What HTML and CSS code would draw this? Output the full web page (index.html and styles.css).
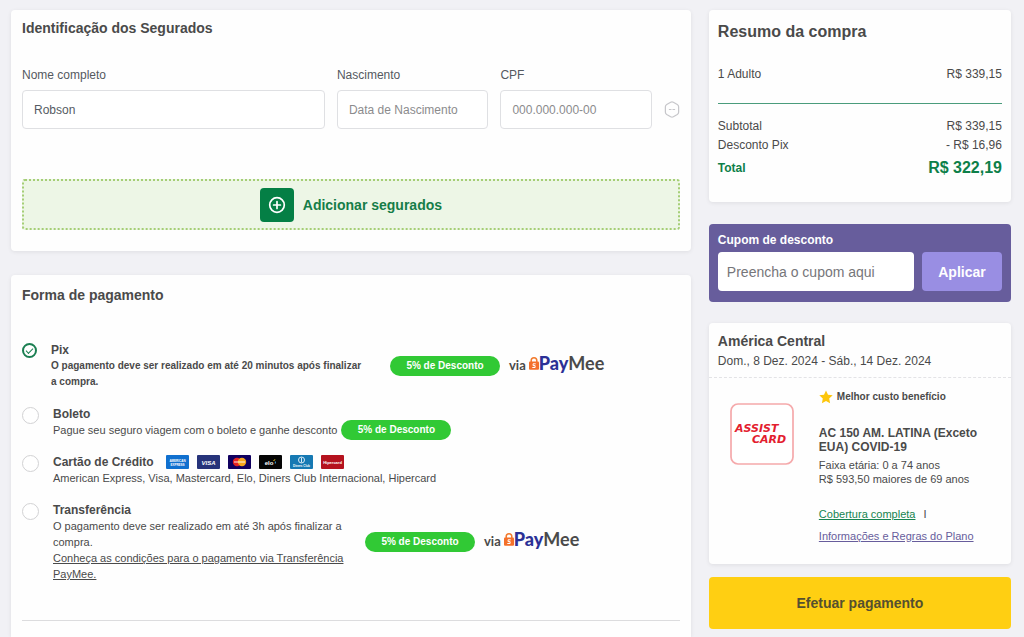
FILE: index.html
```html
<!DOCTYPE html>
<html lang="pt-BR">
<head>
<meta charset="utf-8">
<meta name="viewport" content="width=device-width, initial-scale=1">
<title>Pagamento</title>
<link rel="stylesheet" href="styles.css">
</head>
<body>
<svg class="defs" aria-hidden="true">
  <symbol id="lock" viewBox="0 0 10 13">
    <path d="M2.2 6V3.6a2.8 2.8 0 0 1 5.6 0V6" fill="none" stroke="#f27a2c" stroke-width="1.5"/>
    <rect x="0" y="4.6" width="10" height="8.2" rx="1" fill="#f4702a"/>
    <path d="M6.7 6.8H4.1v1.8h2v1.9H3.3" fill="none" stroke="#fff" stroke-width="1"/>
  </symbol>
</svg>
<div class="page">
  <main class="column">
    <section class="card insured">
      <h2 class="title">Identificação dos Segurados</h2>
      <form class="fields">
        <div class="field">
          <label for="nome">Nome completo</label>
          <input id="nome" type="text" value="Robson">
        </div>
        <div class="field">
          <label for="nascimento">Nascimento</label>
          <input id="nascimento" type="text" placeholder="Data de Nascimento">
        </div>
        <div class="field">
          <label for="cpf">CPF</label>
          <input id="cpf" type="text" placeholder="000.000.000-00">
        </div>
        <button class="remove" type="button" aria-label="Remover segurado">
          <svg width="16" height="17" viewBox="0 0 16 18" fill="none" stroke="#c6c6ca" stroke-width="1.3" stroke-linejoin="round">
            <path d="M6.6 1.3Q8 .6 9.4 1.3L13.6 3.7Q15 4.600 15 6V12Q15 13.400 13.600 14.300L9.400 16.700Q8 17.400 6.600 16.700L2.400 14.300Q1 13.400 1 12V6Q1 4.600 2.400 3.700Z"/>
            <path d="M4.700 9H11.300" stroke-dasharray="2.800 1"/>
          </svg>
        </button>
      </form>
      <button class="add" type="button">
        <span class="add-icon">
          <svg width="18" height="18" viewBox="0 0 18 18" fill="none" stroke="#fff" stroke-width="1.700" stroke-linecap="round">
            <circle cx="9" cy="9" r="7.300"/>
            <path d="M9 5.600V12.400M5.600 9H12.400"/>
          </svg>
        </span>
        Adicionar segurados
      </button>
    </section>

    <section class="card payment">
      <h2 class="title">Forma de pagamento</h2>
      <div class="options">
        <div class="option">
          <input class="radio" type="radio" name="forma" id="pix" checked>
          <div class="option-text wide">
            <label for="pix">Pix</label>
            <p class="strong">O pagamento deve ser realizado em até 20 minutos após finalizar a compra.</p>
          </div>
          <span class="pill">5% de Desconto</span>
          <span class="via">via <span class="paymee"><svg class="lock" width="10" height="13"><use href="#lock"/></svg><b>Pay</b>Mee</span></span>
        </div>
        <div class="option">
          <input class="radio" type="radio" name="forma" id="boleto">
          <div class="option-text">
            <label for="boleto">Boleto</label>
            <div class="line">
              <p>Pague seu seguro viagem com o boleto e ganhe desconto</p>
              <span class="pill">5% de Desconto</span>
            </div>
          </div>
        </div>
        <div class="option">
          <input class="radio" type="radio" name="forma" id="cartao">
          <div class="option-text">
            <div class="line brand-line">
              <label for="cartao">Cartão de Crédito</label>
              <span class="brands">
                <svg width="23" height="14" viewBox="0 0 23 14"><rect width="23" height="14" rx="1" fill="#1070cf"/><text x="11.500" y="6.700" class="brand-text tiny">AMERICAN</text><text x="11.500" y="10.700" class="brand-text tiny">EXPRESS</text></svg>
                <svg width="23" height="14" viewBox="0 0 23 14"><rect width="23" height="14" rx="1" fill="#26337a"/><text x="11.500" y="9.500" class="brand-text italic">VISA</text></svg>
                <svg width="23" height="14" viewBox="0 0 23 14"><rect width="23" height="14" rx="1" fill="#10005f"/><circle cx="9" cy="7" r="4.200" fill="#e32222"/><circle cx="14" cy="7" r="4.200" fill="#f8a51b"/><path d="M6 7H17" stroke="#fff" stroke-width="1.300" opacity=".7"/></svg>
                <svg width="23" height="14" viewBox="0 0 23 14"><rect width="23" height="14" rx="1" fill="#050505"/><text x="10" y="9.500" class="brand-text">elo</text><path d="M14.500 5.500l1.700-.8" stroke="#f7d21a"/><path d="M16.300 6.500v2" stroke="#48a8dc"/></svg>
                <svg width="23" height="14" viewBox="0 0 23 14"><rect width="23" height="14" rx="1" fill="#1679b3"/><circle cx="11.500" cy="5" r="3" fill="none" stroke="#d8eaf5" stroke-width="1"/><path d="M11.500 2.500V7.500" stroke="#d8eaf5"/><text x="11.500" y="12" class="brand-text tiny">Diners Club</text></svg>
                <svg width="23" height="14" viewBox="0 0 23 14"><rect width="23" height="14" rx="1" fill="#b5121e"/><text x="11.500" y="8.500" class="brand-text small">Hipercard</text></svg>
              </span>
            </div>
            <p>American Express, Visa, Mastercard, Elo, Diners Club Internacional, Hipercard</p>
          </div>
        </div>
        <div class="option">
          <input class="radio" type="radio" name="forma" id="transferencia">
          <div class="option-text medium">
            <label for="transferencia">Transferência</label>
            <p>O pagamento deve ser realizado em até 3h após finalizar a compra.</p>
            <a class="terms" href="#">Conheça as condições para o pagamento via Transferência PayMee.</a>
          </div>
          <span class="pill">5% de Desconto</span>
          <span class="via">via <span class="paymee"><svg class="lock" width="10" height="13"><use href="#lock"/></svg><b>Pay</b>Mee</span></span>
        </div>
      </div>
      <hr class="divider">
    </section>
  </main>

  <aside class="column">
    <section class="card summary">
      <h2 class="summary-title">Resumo da compra</h2>
      <dl class="row"><dt>1 Adulto</dt><dd>R$ 339,15</dd></dl>
      <hr class="green-line">
      <dl class="row"><dt>Subtotal</dt><dd>R$ 339,15</dd></dl>
      <dl class="row"><dt>Desconto Pix</dt><dd>- R$ 16,96</dd></dl>
      <dl class="row total"><dt>Total</dt><dd>R$ 322,19</dd></dl>
    </section>

    <form class="coupon">
      <label for="cupom">Cupom de desconto</label>
      <div class="coupon-row">
        <input id="cupom" type="text" placeholder="Preencha o cupom aqui">
        <button type="button">Aplicar</button>
      </div>
    </form>

    <section class="card trip">
      <header class="trip-head">
        <h2>América Central</h2>
        <p>Dom., 8 Dez. 2024 - Sáb., 14 Dez. 2024</p>
      </header>
      <div class="trip-body">
        <svg class="assist" width="64" height="62" viewBox="0 0 64 62" role="img" aria-label="Assist Card">
          <rect x="1" y="1" width="62" height="60" rx="7" fill="#fff" stroke="#f5a9ab" stroke-width="1.700"/>
          <text x="5" y="29">ASSIST</text>
          <text x="22" y="40">CARD</text>
        </svg>
        <div class="plan">
          <p class="badge">
            <svg width="14" height="14" viewBox="0 0 14 14"><path d="M7 .4l2 4.300 4.700.6-3.500 3.200.9 4.700L7 10.900l-4.100 2.300.9-4.700L.3 5.300l4.700-.6z" fill="#fdc60b"/></svg>
            Melhor custo benefício
          </p>
          <h3>AC 150 AM. LATINA (Exceto EUA) COVID-19</h3>
          <p>Faixa etária: 0 a 74 anos</p>
          <p>R$ 593,50 maiores de 69 anos</p>
          <div class="links">
            <span><a class="coverage" href="#">Cobertura completa</a><span class="bar">I</span></span>
            <a class="rules" href="#">Informações e Regras do Plano</a>
          </div>
        </div>
      </div>
    </section>

    <button class="pay" type="button">Efetuar pagamento</button>
  </aside>
</div>
</body>
</html>
```
FILE: styles.css
```css
* {
  box-sizing: border-box;
}

body {
  margin: 0;
  background: #f1f1f5;
  color: #4a4a4a;
  font-family: "Liberation Sans", Arial, sans-serif;
  font-size: 12px;
  line-height: 16px;
}

h2, h3, p, dl, dd, hr {
  margin: 0;
}

input, button {
  font: inherit;
}

button {
  border: 0;
  cursor: pointer;
}

.defs {
  position: absolute;
  width: 0;
  height: 0;
}

.page {
  display: grid;
  grid-template-columns: minmax(0, 9fr) minmax(0, 4fr);
  gap: 18px;
  min-height: 100vh;
  padding: 10px 13px 0 11px;
}

.column {
  display: flex;
  flex-direction: column;
}

.card {
  background: #fefefe;
  border-radius: 4px;
  box-shadow: 0 1px 4px rgba(0, 0, 0, 0.08);
}

.title {
  font-size: 14px;
  line-height: 18px;
}

/* Insured people */
.insured {
  margin-bottom: 24px;
  padding: 9px 11px 21px;
}

.fields {
  display: grid;
  grid-template-columns: 2fr 1fr 1fr 16px;
  align-items: end;
  gap: 12px;
  margin: 30px 0 50px;
}

.field {
  display: grid;
  gap: 7px;
  color: #55595f;
}

.field input {
  width: 100%;
  height: 39px;
  padding: 0 11px;
  border: 1px solid #dfe0e3;
  border-radius: 4px;
  background: #fff;
  color: #555b63;
}

.field input::placeholder {
  color: #8b8b8d;
}

.remove {
  display: flex;
  align-items: center;
  height: 39px;
  padding: 0;
  background: none;
}

.add {
  display: flex;
  align-items: center;
  justify-content: center;
  gap: 9px;
  width: 100%;
  height: 51px;
  padding: 0;
  border: 2px dotted #a5ce76;
  border-radius: 3px;
  background: #edf6e6;
  color: #167d48;
  font-size: 14px;
  font-weight: bold;
}

.add-icon {
  display: grid;
  place-items: center;
  width: 34px;
  height: 34px;
  border-radius: 4px;
  background: #047f45;
}

/* Payment methods */
.payment {
  flex: 1;
  padding: 11px 11px 16px;
  border-radius: 4px 4px 0 0;
}

.options {
  display: grid;
  gap: 16px;
  margin: 38px 0;
}

.option {
  display: flex;
  align-items: center;
}

.option p,
.terms {
  font-size: 11px;
}

.option label {
  font-weight: bold;
}

.option .strong {
  max-width: 316px;
  font-size: 10px;
  font-weight: bold;
}

.radio {
  appearance: none;
  display: grid;
  place-items: center;
  align-self: flex-start;
  flex: none;
  width: 17px;
  height: 17px;
  margin: 1px 14px 0 0;
  border: 1px solid #d2d2d4;
  border-radius: 50%;
  background: #fff;
}

.radio:checked {
  width: 15px;
  height: 15px;
  border: 2px solid #1b7f52;
}

.radio:checked::before {
  content: "";
  width: 6px;
  height: 3px;
  margin-bottom: 2px;
  border: solid #1b7f52;
  border-width: 0 0 1px 1px;
  transform: rotate(-45deg);
}

.wide {
  width: 339px;
}

.medium {
  width: 312px;
}

.medium p,
.terms {
  display: block;
  max-width: 300px;
}

.terms {
  color: inherit;
}

.line {
  display: flex;
  align-items: center;
  gap: 4px;
  height: 16px;
}

.brand-line {
  gap: 12px;
}

.pill {
  flex: none;
  width: 110px;
  border-radius: 10px;
  background: #31c935;
  color: #fff;
  font-size: 10px;
  font-weight: bold;
  line-height: 20px;
  text-align: center;
}

.via {
  display: flex;
  align-items: baseline;
  gap: 3px;
  margin: 0 0 4px 9px;
  font-family: Lato, sans-serif;
  font-size: 13px;
  font-weight: bold;
}

.paymee {
  font-size: 18px;
}

.paymee b {
  color: #2b3096;
  font-weight: 900;
}

.brands {
  display: flex;
  gap: 8px;
}

.brand-text {
  fill: #fff;
  font-size: 6px;
  font-weight: bold;
  text-anchor: middle;
}

.brand-text.small {
  font-size: 4px;
}

.brand-text.tiny {
  font-size: 3px;
}

.brand-text.italic {
  font-style: italic;
}

.divider {
  border: 0;
  border-top: 1px solid #dcdcde;
}

/* Purchase summary */
.summary {
  margin-bottom: 22px;
  padding: 12px 9px 21px;
}

.summary-title {
  margin-bottom: 23px;
  font-size: 16px;
  line-height: 20px;
}

.row {
  display: flex;
  align-items: center;
  justify-content: space-between;
  line-height: 19px;
}

.green-line {
  margin: 19px 0 13px;
  border: 0;
  border-top: 1px solid #4a9c7c;
}

.total {
  color: #0d7f49;
  font-weight: bold;
  line-height: 26px;
}

.total dd {
  font-size: 16px;
}

/* Coupon */
.coupon {
  margin-bottom: 21px;
  padding: 8px 9px 11px;
  border-radius: 4px;
  background: #675d9c;
  color: #fff;
  font-weight: bold;
}

.coupon label {
  display: block;
  margin-bottom: 4px;
}

.coupon-row {
  display: flex;
  gap: 8px;
  font-size: 14px;
}

.coupon input {
  flex: 1;
  min-width: 0;
  height: 39px;
  padding: 0 9px;
  border: 0;
  border-radius: 4px;
  background: #fff;
  font-weight: normal;
}

.coupon input::placeholder {
  color: #76767a;
}

.coupon button {
  width: 80px;
  border-radius: 4px;
  background: #998ee3;
  color: #fff;
}

/* Trip */
.trip {
  margin-bottom: 13px;
}

.trip-head {
  padding: 8px 9px 6px;
  border-bottom: 1px dashed #e3e3e6;
}

.trip-head h2 {
  font-size: 14px;
  line-height: 20px;
}

.trip-head p {
  line-height: 20px;
}

.trip-body {
  display: grid;
  grid-template-columns: 64px minmax(0, 1fr);
  gap: 25px;
  padding: 10px 16px 17px 21px;
}

.assist {
  margin-top: 15px;
}

.assist text {
  fill: #e3202e;
  font-family: "DejaVu Sans", sans-serif;
  font-size: 11px;
  font-style: italic;
  font-weight: bold;
}

.plan {
  font-size: 11px;
  line-height: 14px;
}

.badge {
  display: flex;
  align-items: center;
  gap: 4px;
  line-height: 18px;
  font-size: 10px;
  font-weight: bold;
}

.plan h3 {
  margin: 20px 0 4px;
  font-size: 12px;
  line-height: 14px;
}

.links {
  display: grid;
  margin-top: 17px;
  line-height: 22px;
}

.coverage {
  color: #178450;
}

.rules {
  color: #675d9c;
}

.bar {
  margin-left: 8px;
}

.pay {
  height: 52px;
  border-radius: 4px;
  background: #ffcf12;
  color: #55502f;
  font-size: 14px;
  font-weight: bold;
}
```
